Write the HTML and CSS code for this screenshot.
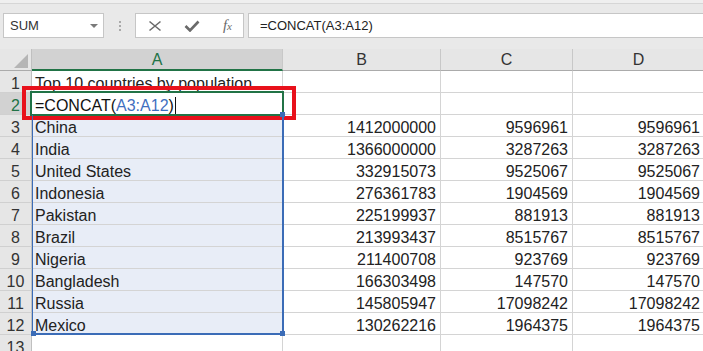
FILE: index.html
```html
<!DOCTYPE html>
<html>
<head>
<meta charset="utf-8">
<link rel="stylesheet" href="styles.css">
</head>
<body>
<div class="app">
  <div class="toolbar">
    <div class="namebox"><span>SUM</span><span class="drop"></span></div>
    <div class="grip"><i></i><i></i><i></i></div>
    <div class="btnbox">
      <svg class="ico" width="14" height="12" viewBox="0 0 14 12"><path d="M1.5 1.5 L12.5 10.5 M12.5 1.5 L1.5 10.5" stroke="#6a6a6a" stroke-width="1.6" fill="none"/></svg>
      <svg class="ico" width="16" height="12" viewBox="0 0 16 12"><path d="M1.5 6 L6 10.5 L14.5 1.5" stroke="#6a6a6a" stroke-width="2.6" fill="none"/></svg>
      <span class="fx">f<span class="fxx">x</span></span>
    </div>
    <div class="formula">=CONCAT(A3:A12)</div>
  </div>
  <div class="stack">
    <div class="sheet">
      <div class="corner"><svg width="32" height="22" viewBox="0 0 32 22"><path d="M14 19 L28 19 L28 5 Z" fill="#b5b5b5"/></svg></div>
      <div class="ch sel-h">A</div>
      <div class="ch">B</div>
      <div class="ch">C</div>
      <div class="ch">D</div>

      <div class="rh">1</div><div class="c">Top 10 countries by population</div><div class="c"></div><div class="c"></div><div class="c"></div>
      <div class="rh act">2</div><div class="c edit">=CONCAT(<span class="ref">A3:A12</span>)<span class="caret"></span></div><div class="c"></div><div class="c"></div><div class="c"></div>
      <div class="rh">3</div><div class="c s">China</div><div class="c n">1412000000</div><div class="c n">9596961</div><div class="c n">9596961</div>
      <div class="rh">4</div><div class="c s">India</div><div class="c n">1366000000</div><div class="c n">3287263</div><div class="c n">3287263</div>
      <div class="rh">5</div><div class="c s">United States</div><div class="c n">332915073</div><div class="c n">9525067</div><div class="c n">9525067</div>
      <div class="rh">6</div><div class="c s">Indonesia</div><div class="c n">276361783</div><div class="c n">1904569</div><div class="c n">1904569</div>
      <div class="rh">7</div><div class="c s">Pakistan</div><div class="c n">225199937</div><div class="c n">881913</div><div class="c n">881913</div>
      <div class="rh">8</div><div class="c s">Brazil</div><div class="c n">213993437</div><div class="c n">8515767</div><div class="c n">8515767</div>
      <div class="rh">9</div><div class="c s">Nigeria</div><div class="c n">211400708</div><div class="c n">923769</div><div class="c n">923769</div>
      <div class="rh">10</div><div class="c s">Bangladesh</div><div class="c n">166303498</div><div class="c n">147570</div><div class="c n">147570</div>
      <div class="rh">11</div><div class="c s">Russia</div><div class="c n">145805947</div><div class="c n">17098242</div><div class="c n">17098242</div>
      <div class="rh">12</div><div class="c s">Mexico</div><div class="c n">130262216</div><div class="c n">1964375</div><div class="c n">1964375</div>
      <div class="rh">13</div><div class="c"></div><div class="c"></div><div class="c"></div><div class="c"></div>
    </div>
    <div class="overlay">
      <div class="range"><span class="h h-tr"></span><span class="h h-br"></span><span class="h h-bl"></span></div>
      <div class="active"></div>
      <div class="callout"></div>
    </div>
  </div>
</div>
</body>
</html>
```
FILE: styles.css
```css
html, body {
  margin: 0;
  padding: 0;
  background: #ffffff;
}
body {
  width: 703px;
  height: 351px;
  overflow: hidden;
  font-family: "Liberation Sans", Arial, sans-serif;
}
.app {
  width: 703px;
  height: 351px;
  overflow: hidden;
}
.toolbar {
  height: 49px;
  box-sizing: border-box;
  background: #e9e9e9;
  border-top: 3px solid #efefef;
  box-shadow: inset 0 1px 0 #d6d6d6;
  display: flex;
  align-items: flex-start;
  padding: 10px 0 0 3px;
}
.namebox {
  width: 101px;
  height: 25px;
  box-sizing: border-box;
  background: #fff;
  border: 1px solid #c6c6c6;
  display: flex;
  align-items: center;
  justify-content: space-between;
  padding: 0 5px 0 6px;
  font-size: 13px;
  color: #333;
}
.drop {
  width: 0;
  height: 0;
  border-left: 4px solid transparent;
  border-right: 4px solid transparent;
  border-top: 4px solid #7a7a7a;
}
.grip {
  width: 31px;
  height: 25px;
  display: flex;
  flex-direction: column;
  align-items: center;
  justify-content: center;
  gap: 2px;
}
.grip i {
  width: 2px;
  height: 2px;
  background: #a9a9a9;
}
.btnbox {
  width: 109px;
  height: 25px;
  box-sizing: border-box;
  background: #fff;
  border: 1px solid #c6c6c6;
  display: flex;
  align-items: center;
  justify-content: space-between;
  padding: 0 11px 0 12px;
}
.fx {
  font-family: "Liberation Serif", "Times New Roman", serif;
  font-style: italic;
  font-size: 15px;
  color: #6a6a6a;
  line-height: 1;
}
.fxx {
  font-size: 11px;
}
.formula {
  flex: 1;
  margin-left: 4px;
  height: 25px;
  box-sizing: border-box;
  background: #fff;
  border: 1px solid #c6c6c6;
  border-right: 0;
  display: flex;
  align-items: center;
  padding-left: 11px;
  font-size: 13px;
  color: #222;
}
.stack {
  display: grid;
}
.sheet,
.overlay {
  grid-area: 1 / 1;
  display: grid;
  grid-template-columns: 32px 251px 158px 132px 132px;
  grid-template-rows: repeat(14, 22px);
}
.sheet > div {
  box-sizing: border-box;
}
.corner {
  background: #e6e6e6;
  border-right: 1px solid #c0c0c0;
  border-bottom: 1px solid #ababab;
}
.corner svg {
  display: block;
}
.ch {
  background: #e6e6e6;
  border-right: 1px solid #c8c8c8;
  border-bottom: 1px solid #ababab;
  display: flex;
  align-items: center;
  justify-content: center;
  font-size: 16px;
  color: #333;
}
.ch.sel-h {
  background: #d2d2d2;
  color: #217346;
  border-bottom: 2px solid #217346;
  padding-top: 1px;
}
.rh {
  background: #e6e6e6;
  border-right: 1px solid #c0c0c0;
  border-bottom: 1px solid #d0d0d0;
  display: flex;
  align-items: flex-end;
  justify-content: center;
  font-size: 16px;
  line-height: 16px;
  color: #333;
}
.rh.act {
  background: #d2d2d2;
  color: #217346;
}
.c {
  border-right: 1px solid #d4d4d4;
  border-bottom: 1px solid #d4d4d4;
  display: flex;
  align-items: flex-end;
  padding: 0 4px 0 3px;
  font-size: 16px;
  line-height: 16px;
  color: #222;
  white-space: nowrap;
}
.c.n {
  justify-content: flex-end;
}
.c.s {
  background: #e8edf7;
}
.edit {
  color: #111;
}
.ref {
  color: #3f6fbf;
}
.caret {
  display: inline-block;
  width: 1px;
  height: 18px;
  background: #111;
  margin-left: 1px;
  margin-bottom: -1px;
}
.overlay > div {
  box-sizing: border-box;
}
.range {
  grid-column: 2;
  grid-row: 4 / 14;
  margin: 0 -1px 0 0;
  border-right: 2px solid #3b6cb7;
  border-bottom: 2px solid #3b6cb7;
  border-left: 1px solid #3b6cb7;
  position: relative;
}
.h {
  position: absolute;
  width: 5px;
  height: 5px;
  background: #3b6cb7;
}
.h-tr { right: -3px; top: -3px; }
.h-br { right: -3px; bottom: -3px; }
.h-bl { left: -2px; bottom: -3px; }
.active {
  grid-column: 2;
  grid-row: 3;
  margin: -2px -1px -1px -2px;
  border: 2px solid #217346;
}
.callout {
  grid-column: 2;
  grid-row: 3;
  margin: -7px -13px -5px -10px;
  border: 4px solid #e8111b;
}
```
